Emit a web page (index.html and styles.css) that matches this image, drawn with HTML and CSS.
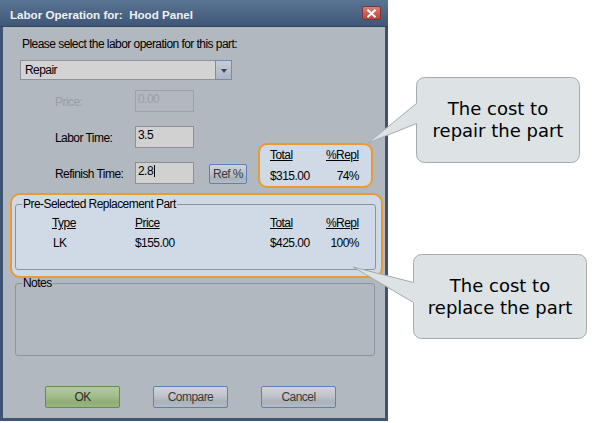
FILE: index.html
```html
<!DOCTYPE html>
<html>
<head>
<meta charset="utf-8">
<link rel="stylesheet" href="styles.css">
</head>
<body>
<div class="dialog">
  <div class="titlebar">
    <span class="title">Labor Operation for:  Hood Panel</span>
    <span class="close"><svg width="11" height="9" viewBox="0 0 11 9"><path d="M1.5 0.8 L9.5 8.2 M9.5 0.8 L1.5 8.2" stroke="#fff" stroke-width="2"/></svg></span>
  </div>
  <div class="content">
    <p class="prompt">Please select the labor operation for this part:</p>
    <div class="select"><span class="select-value">Repair</span><span class="select-btn"><span class="tri"></span></span></div>
    <div class="mid">
      <div class="form">
        <span class="label disabled">Price:</span><span class="input disabled">0.00</span>
        <span class="label">Labor Time:</span><span class="input">3.5</span>
        <span class="label">Refinish Time:</span><span class="input">2.8<span class="caret"></span></span><span class="btn ref">Ref %</span>
      </div>
      <div class="repair hl">
        <u>Total</u><u>%Repl</u>
        <span>$315.00</span><span class="r">74%</span>
      </div>
    </div>
    <div class="replace hl">
      <fieldset class="group">
        <legend>Pre-Selected Replacement Part</legend>
        <div class="rtable">
          <u>Type</u><u>Price</u><u>Total</u><u>%Repl</u>
          <span class="lk">LK</span><span>$155.00</span><span>$425.00</span><span class="r">100%</span>
        </div>
      </fieldset>
    </div>
    <fieldset class="group notes"><legend>Notes</legend></fieldset>
    <div class="buttons">
      <span class="btn ok">OK</span>
      <span class="btn">Compare</span>
      <span class="btn">Cancel</span>
    </div>
  </div>
</div>
<svg class="callouts" width="596" height="423" viewBox="0 0 596 423">
  <path d="M424.5 77.5 H571.5 A8 8 0 0 1 579.5 85.5 V154.5 A8 8 0 0 1 571.5 162.5 H424.5 A8 8 0 0 1 416.5 154.5 V123.5 L368 143 L416.5 103.5 V85.5 A8 8 0 0 1 424.5 77.5 Z" fill="#dde3e5" stroke="#a2acad" stroke-width="1"/>
  <path d="M421.5 254.5 H578.5 A8 8 0 0 1 586.5 262.5 V330.5 A8 8 0 0 1 578.5 338.5 H421.5 A8 8 0 0 1 413.5 330.5 V302.5 L353 267 L413.5 282.5 V262.5 A8 8 0 0 1 421.5 254.5 Z" fill="#dde3e5" stroke="#a2acad" stroke-width="1"/>
</svg>
<div class="bubble b1">The cost to<br>repair the part</div>
<div class="bubble b2">The cost to<br>replace the part</div>
</body>
</html>
```
FILE: styles.css
```css
* { box-sizing: border-box; }
html, body { margin: 0; padding: 0; background: #fff; }
body {
  width: 596px; height: 423px; overflow: hidden; position: relative;
  font-family: "Liberation Sans", Arial, sans-serif;
  font-size: 12px; letter-spacing: -0.55px; line-height: 15px; color: #000;
}
u { text-decoration: underline; }
.dialog {
  width: 388px; height: 421px; background: #3e5472;
  display: flex; flex-direction: column;
}
.titlebar {
  height: 27px; flex: none; display: flex; justify-content: space-between; align-items: flex-start;
  background: linear-gradient(#5a7493, #3f5776);
  border-bottom: 1px solid #30455f;
}
.title {
  margin: 8px 0 0 10px; white-space: pre; letter-spacing: 0;
  font-family: "Liberation Sans", Arial, sans-serif; font-weight: bold;
  font-size: 11.6px; line-height: 14px; color: #eef2f6;
}
.close {
  margin: 6px 7px 0 0; width: 19px; height: 14px;
  border: 1px solid #7e3634; border-radius: 2px;
  background: linear-gradient(#d9807b, #b8453f);
  display: flex; align-items: center; justify-content: center;
}
.content {
  flex: 1; margin: 0 3px 3px; background: #b1b8c0;
  display: flex; flex-direction: column; align-items: flex-start;
}
.prompt { margin: 10px 0 0 19px; white-space: nowrap; }
.select { margin: 8px 0 0 17px; width: 212px; height: 20px; display: flex; }
.select-value {
  flex: 1; background: #d3d3d3; border: 1px solid #8c9298; border-right: none;
  padding: 2px 0 0 4px;
}
.select-btn {
  width: 17px; border: 1px solid #6d8dbe; background: linear-gradient(#c6cdd6, #aeb6c2);
  display: flex; align-items: center; justify-content: center;
}
.tri {
  width: 0; height: 0; margin-top: 1px;
  border-top: 4px solid #2c4676; border-left: 3.5px solid transparent; border-right: 3.5px solid transparent;
}
.mid { display: flex; align-items: flex-start; margin: 10px 0 0 52px; }
.form {
  display: grid; grid-template-columns: 80px 59px 15px 38px;
  grid-auto-rows: 22px; row-gap: 14px;
}
.label { grid-column: 1; padding-top: 5px; white-space: nowrap; }
.label.disabled { color: #979ea6; }
.input {
  grid-column: 2; background: #d1d1d1; border: 1px solid #8b9096;
  padding: 1px 0 0 2px; line-height: 15px;
}
.input.disabled { background: transparent; border-color: #9ca2a8; color: #9aa0a6; }
.caret {
  display: inline-block; width: 1px; height: 12px; background: #000;
  vertical-align: -2px; margin-left: 1px;
}
.btn {
  display: block; height: 22px; width: 75px;
  border: 1px solid #5b7fc0; border-radius: 2px;
  background: linear-gradient(#d0d4d9, #bfc4cb 45%, #aab1ba 75%, #b6bcc4);
  color: #3a3a3a; text-align: center; line-height: 20px; white-space: nowrap;
}
.btn.ref { grid-column: 4; align-self: end; width: 38px; height: 20px; line-height: 18px; }
.btn.ok {
  border-color: #5f8f4d;
  background: linear-gradient(#b2c99d, #a3bd8b 45%, #8fad77 75%, #9ab682);
  color: #2c2c2c;
}
.hl { border: 2px solid #e99b30; background: #cfdae6; }
.repair {
  margin: 53px 0 0 11px; width: 115px; height: 45px; border-radius: 9px;
  display: grid; grid-template-columns: 56px 33px; row-gap: 6px; padding: 3px 0 0 10px;
  align-content: start;
}
.r { justify-self: end; }
.replace {
  margin: 5px 0 0 7px; width: 373px; height: 85px; border-radius: 10px;
  padding: 4px 5px 0 3px;
}
.group {
  margin: 0; padding: 0; min-width: 0;
  border: 1px solid #8c959e; border-radius: 3px;
}
.group legend { margin-left: 6px; padding: 0 1px; line-height: 11px; }
.rtable {
  display: grid; grid-template-columns: 83px 135px 56px 33px;
  row-gap: 5px; padding: 6px 0 18px 36px;
}
.lk { padding-left: 1px; }
.notes { margin-left: 12px; width: 360px; height: 78px; }
.buttons { display: flex; gap: 33px; margin: 30px 0 0 42px; }
.callouts { position: absolute; left: 0; top: 0; pointer-events: none; }
.bubble {
  position: absolute; display: flex; align-items: center; justify-content: center;
  font-family: "DejaVu Sans", Verdana, sans-serif; font-size: 18px; line-height: 22px;
  letter-spacing: 0; text-align: center; color: #000; height: 85px;
}
.b1 { left: 416px; top: 77px; width: 164px; }
.b2 { left: 413px; top: 254px; width: 174px; }
```
